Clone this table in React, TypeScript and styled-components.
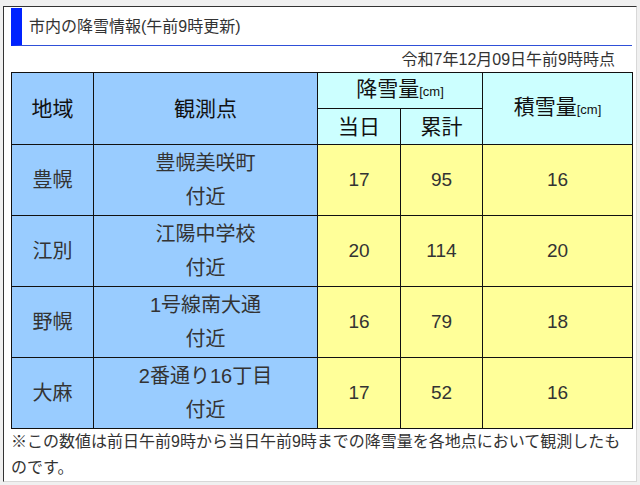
import styled, { createGlobalStyle } from "styled-components";

const GlobalStyle = createGlobalStyle`
  html, body {
    margin: 0;
    padding: 0;
    background: #f0f0f0;
  }
  body {
    font-family: "Liberation Sans", "Noto Sans CJK JP", sans-serif;
    color: #333;
  }
`;

const Panel = styled.div`
  margin: 6px 3px 0 3px;
  height: 476px;
  box-sizing: border-box;
  background: #fff;
  border-top: 1px solid #333;
  border-left: 1px solid #333;
  border-right: 1px solid #d8d8d8;
  border-bottom: 1px solid #d8d8d8;
  padding: 1px 4px 0 7px;
`;

const Heading = styled.h2`
  margin: 0;
  height: 38px;
  box-sizing: border-box;
  border-left: 11px solid #0022ff;
  border-bottom: 1px solid #2f50d8;
  padding-left: 7px;
  font-size: 16px;
  font-weight: normal;
  line-height: 37px;
  color: #333;
`;

const Stamp = styled.p`
  margin: 2px 0 0;
  padding-right: 17px;
  text-align: right;
  font-size: 16px;
  line-height: 24px;
`;

const Table = styled.table`
  width: 621px;
  border-collapse: collapse;
  table-layout: fixed;
`;

const Head = styled.th<{ $tone: "blue" | "cyan" }>`
  border: 1px solid #111;
  background: ${(p) => (p.$tone === "blue" ? "#99ccff" : "#ccffff")};
  height: 35px;
  padding: 0;
  font-size: 21px;
  font-weight: normal;
  color: #111;
  text-align: center;
  line-height: 24px;
`;

const Unit = styled.span`
  font-size: 13px;
`;

const Cell = styled.td<{ $tone: "blue" | "yellow" }>`
  border: 1px solid #111;
  background: ${(p) => (p.$tone === "blue" ? "#99ccff" : "#ffff99")};
  height: 70px;
  padding: 0;
  text-align: center;
  font-size: 20px;
  line-height: 34px;
  color: #333;
`;

const Num = styled(Cell)`
  font-size: 19px;
`;

const Note = styled.p`
  margin: 0;
  font-size: 16px;
  line-height: 26px;
`;

type Row = {
  area: string;
  place: string;
  today: number;
  total: number;
  depth: number;
};

const rows: Row[] = [
  { area: "豊幌", place: "豊幌美咲町", today: 17, total: 95, depth: 16 },
  { area: "江別", place: "江陽中学校", today: 20, total: 114, depth: 20 },
  { area: "野幌", place: "1号線南大通", today: 16, total: 79, depth: 18 },
  { area: "大麻", place: "2番通り16丁目", today: 17, total: 52, depth: 16 },
];

export default function App() {
  return (
    <>
      <GlobalStyle />
      <Panel>
        <Heading>市内の降雪情報(午前9時更新)</Heading>
        <Stamp>令和7年12月09日午前9時時点</Stamp>
        <Table>
          <colgroup>
            <col style={{ width: 82 }} />
            <col style={{ width: 224 }} />
            <col style={{ width: 83 }} />
            <col style={{ width: 82 }} />
            <col style={{ width: 150 }} />
          </colgroup>
          <thead>
            <tr>
              <Head $tone="blue" rowSpan={2}>地域</Head>
              <Head $tone="blue" rowSpan={2}>観測点</Head>
              <Head $tone="cyan" colSpan={2}>
                降雪量<Unit>[cm]</Unit>
              </Head>
              <Head $tone="cyan" rowSpan={2}>
                積雪量<Unit>[cm]</Unit>
              </Head>
            </tr>
            <tr>
              <Head $tone="cyan">当日</Head>
              <Head $tone="cyan">累計</Head>
            </tr>
          </thead>
          <tbody>
            {rows.map((r) => (
              <tr key={r.area}>
                <Cell $tone="blue">{r.area}</Cell>
                <Cell $tone="blue">
                  {r.place}
                  <br />
                  付近
                </Cell>
                <Num $tone="yellow">{r.today}</Num>
                <Num $tone="yellow">{r.total}</Num>
                <Num $tone="yellow">{r.depth}</Num>
              </tr>
            ))}
          </tbody>
        </Table>
        <Note>
          ※この数値は前日午前9時から当日午前9時までの降雪量を各地点において観測したものです。
        </Note>
      </Panel>
    </>
  );
}
